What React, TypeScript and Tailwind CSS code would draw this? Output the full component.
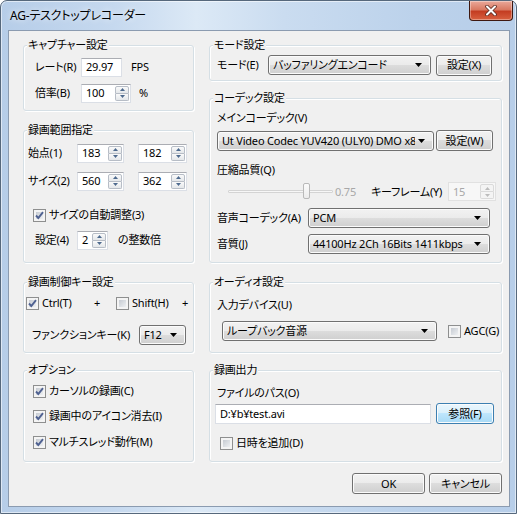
import React from "react";

// Windows 7 style dialog: AG-デスクトップレコーダー settings

const btnBg = "bg-[linear-gradient(#f2f2f2,#ebebeb_50%,#dddddd_50%,#cfcfcf)]";

function Arrow({ up, color }: { up?: boolean; color: string }) {
  return (
    <svg width="5" height="3" viewBox="0 0 5 3">
      <polygon points={up ? "2.5,0 5,3 0,3" : "0,0 5,0 2.5,3"} fill={color} />
    </svg>
  );
}

function Spinner({ disabled }: { disabled?: boolean }) {
  const cls = disabled
    ? "border-[#dadada] bg-[#f4f4f4]"
    : "border-[#b7bdc6] bg-[linear-gradient(#fafafa,#e4e7ea)]";
  const c = disabled ? "#bcbcbc" : "#4e6a8e";
  return (
    <div className="flex h-full w-[15px] shrink-0 flex-col py-[1px] pr-[1px]">
      <div className={`flex flex-1 items-center justify-center rounded-t-[2px] border ${cls}`}>
        <Arrow up color={c} />
      </div>
      <div className={`flex flex-1 items-center justify-center rounded-b-[2px] border border-t-0 ${cls}`}>
        <Arrow color={c} />
      </div>
    </div>
  );
}

function TextBox({ value, className = "" }: { value: string; className?: string }) {
  return (
    <div className={`flex items-center border border-[#dbdfe6] border-t-[#abadb3] bg-white pl-[4px] ${className}`}>
      <span>{value}</span>
    </div>
  );
}

function SpinBox({ value, className = "", disabled }: { value: string; className?: string; disabled?: boolean }) {
  return (
    <div
      className={`flex h-[19px] items-center border ${
        disabled ? "border-[#e1e1e1] bg-[#f7f7f7] text-[#a8a8a8]" : "border-[#dbdfe6] border-t-[#abadb3] bg-white"
      } ${className}`}
    >
      <span className="flex-1 pl-[4px]">{value}</span>
      <Spinner disabled={disabled} />
    </div>
  );
}

function Combo({ value, className = "" }: { value: string; className?: string }) {
  return (
    <div
      className={`flex h-[20px] items-center rounded-[3px] border border-[#707070] ${btnBg} pl-[4px] pr-[8px] shadow-[inset_0_0_0_1px_#fbfbfb] ${className}`}
    >
      <span className="flex-1 overflow-hidden">{value}</span>
      <svg width="7" height="4" viewBox="0 0 7 4" className="ml-[3px] shrink-0">
        <polygon points="0,0 7,0 3.5,4" fill="#000" />
      </svg>
    </div>
  );
}

function Button({ label, className = "", primary }: { label: string; className?: string; primary?: boolean }) {
  return (
    <div
      className={`flex h-[21px] items-center justify-center rounded-[3px] border ${
        primary
          ? "border-[#3c7fb1] bg-[linear-gradient(#eaf6fd,#d9f0fc_50%,#bee6fd_50%,#a7d9f5)]"
          : `border-[#707070] ${btnBg}`
      } shadow-[inset_0_0_0_1px_#fbfbfb] ${className}`}
    >
      {label}
    </div>
  );
}

function CheckBox({ checked }: { checked?: boolean }) {
  return (
    <span className="relative flex h-[13px] w-[13px] shrink-0 border border-[#8e8f8f] bg-[#f4f4f4] p-[2px]">
      <span className="h-full w-full bg-[linear-gradient(135deg,#c6cbd2,#eef0f2)]" />
      {checked && (
        <svg className="absolute inset-0" width="11" height="11" viewBox="0 0 11 11">
          <path d="M2 5.5 L4.3 8 L9 2.2" fill="none" stroke="#4f6191" strokeWidth="1.9" />
        </svg>
      )}
    </span>
  );
}

function Check({ label, checked, className = "" }: { label: string; checked?: boolean; className?: string }) {
  return (
    <div className={`flex h-[16px] items-center ${className}`}>
      <CheckBox checked={checked} />
      <span className="ml-[3px]">{label}</span>
    </div>
  );
}

function GroupBox({ title, className = "", children }: { title: string; className?: string; children?: React.ReactNode }) {
  return (
    <div className={`rounded-[3px] border border-[#d5dfe5] shadow-[inset_1px_1px_0_#ffffff,1px_1px_0_#ffffff] ${className}`}>
      <div className="-mt-[8px] ml-[3px] w-fit bg-[#f0f0f0] px-[1px] leading-[14px]">{title}</div>
      {children}
    </div>
  );
}

export default function App() {
  return (
    <div className="h-[514px] w-[517px] whitespace-nowrap font-['Noto_Sans','Noto_Sans_CJK_JP',sans-serif] text-[11px] leading-[16px] tracking-[-0.2px] text-black [font-feature-settings:'palt']">
      <div className="flex h-full w-full flex-col rounded-t-[7px] border border-[#56687c] bg-[linear-gradient(90deg,#b6cde8_0%,#c6d9ef_22%,#dce9f6_38%,#cadcf0_55%,#bcd2eb_80%,#b7cee9_100%)] shadow-[inset_0_0_0_1px_rgba(255,255,255,0.55)]">
        {/* title bar */}
        <div className="flex h-[29px] shrink-0 items-start justify-between">
          <div className="mt-[7px] pl-[9px] text-[12px] leading-[16px] [text-shadow:0_0_6px_#fff]">AG-テスクトップレコーダー</div>
          <div className="mr-[3px] flex h-[20px] w-[44px] items-center justify-center rounded-b-[4px] border border-t-0 border-[#3e1810] bg-[linear-gradient(#eaa99a,#d97a63_45%,#c43d22_55%,#d8603f)] shadow-[inset_0_0_0_1px_rgba(255,255,255,0.35)]">
            <svg width="12" height="11" viewBox="0 0 12 11">
              <path d="M2 1.5 L10 9.5 M10 1.5 L2 9.5" stroke="#5a2a20" strokeWidth="3.6" strokeLinecap="round" />
              <path d="M2 1.5 L10 9.5 M10 1.5 L2 9.5" stroke="#ffffff" strokeWidth="2" strokeLinecap="round" />
            </svg>
          </div>
        </div>

        {/* client area */}
        <div className="ml-[7px] h-[477px] w-[502px] border border-[#8b9bb0] bg-[#f0f0f0]">
          <div className="flex gap-[15px] pl-[14px] pt-[14px]">
            {/* left column */}
            <div className="flex w-[171px] flex-col">
              <GroupBox title="キャプチャー設定" className="h-[66px]">
                <div className="mt-[5px] flex h-[20px] items-center pl-[11px]">
                  <span className="w-[46px]">レート(R)</span>
                  <TextBox value="29.97" className="h-[19px] w-[41px]" />
                  <span className="ml-[9px]">FPS</span>
                </div>
                <div className="mt-[6px] flex h-[20px] items-center pl-[11px]">
                  <span className="w-[46px]">倍率(B)</span>
                  <SpinBox value="100" className="w-[50px]" />
                  <span className="ml-[8px]">%</span>
                </div>
              </GroupBox>

              <GroupBox title="録画範囲指定" className="mt-[19px] h-[133px]">
                <div className="mt-[6px] flex h-[20px] items-center pl-[4px]">
                  <span className="w-[49px]">始点(1)</span>
                  <SpinBox value="183" className="w-[47px]" />
                  <SpinBox value="182" className="ml-[14px] w-[49px]" />
                </div>
                <div className="mt-[8px] flex h-[20px] items-center pl-[4px]">
                  <span className="w-[49px]">サイズ(2)</span>
                  <SpinBox value="560" className="w-[47px]" />
                  <SpinBox value="362" className="ml-[14px] w-[49px]" />
                </div>
                <Check label="サイズの自動調整(3)" checked className="mt-[16px] pl-[9px]" />
                <div className="mt-[8px] flex h-[18px] items-center pl-[11px]">
                  <span className="w-[42px]">設定(4)</span>
                  <SpinBox value="2" className="w-[31px]" />
                  <span className="ml-[10px]">の整数倍</span>
                </div>
              </GroupBox>

              <GroupBox title="録画制御キー設定" className="mt-[19px] h-[71px]">
                <div className="mt-[6px] flex h-[16px] items-center pl-[2px]">
                  <Check label="Ctrl(T)" checked className="w-[68px]" />
                  <span className="w-[22px]">+</span>
                  <Check label="Shift(H)" className="w-[66px]" />
                  <span>+</span>
                </div>
                <div className="mt-[14px] flex h-[20px] items-center pl-[8px]">
                  <span className="w-[107px]">ファンクションキー(K)</span>
                  <Combo value="F12" className="w-[47px]" />
                </div>
              </GroupBox>

              <GroupBox title="オプション" className="mt-[17px] h-[92px]">
                <Check label="カーソルの録画(C)" checked className="mt-[6px] pl-[9px]" />
                <Check label="録画中のアイコン消去(I)" checked className="mt-[9px] pl-[9px]" />
                <Check label="マルチスレッド動作(M)" checked className="mt-[10px] pl-[9px]" />
              </GroupBox>
            </div>

            {/* right column */}
            <div className="flex w-[293px] flex-col">
              <GroupBox title="モード設定" className="h-[36px]">
                <div className="mt-[3px] flex h-[20px] items-center pl-[7px]">
                  <span className="w-[51px]">モード(E)</span>
                  <Combo value="バッファリングエンコード" className="w-[163px]" />
                  <Button label="設定(X)" className="ml-[5px] w-[56px]" />
                </div>
              </GroupBox>

              <GroupBox title="コーデック設定" className="mt-[17px] h-[165px]">
                <div className="mt-[5px] h-[16px] pl-[7px]">メインコーデック(V)</div>
                <div className="mt-[4px] flex h-[21px] items-center pl-[7px]">
                  <Combo value="Ut Video Codec YUV420 (ULY0) DMO x86" className="w-[217px]" />
                  <Button label="設定(W)" className="ml-[2px] w-[57px]" />
                </div>
                <div className="mt-[11px] h-[16px] pl-[7px]">圧縮品質(Q)</div>
                <div className="mt-[4px] flex h-[19px] items-center pl-[18px]">
                  <div className="relative flex h-[19px] w-[105px] items-center">
                    <div className="h-[3px] w-full rounded-[1px] border border-[#d4d4d4] bg-[#f7f7f7]" />
                    <div className="absolute left-[75px] top-[1px] h-[16px] w-[7px] rounded-[2px] border border-[#b9b9b9] bg-[linear-gradient(#fbfbfb,#ececec)]" />
                  </div>
                  <span className="w-[38px] pl-[2px] text-[#a8a8a8]">0.75</span>
                  <span className="w-[77px]">キーフレーム(Y)</span>
                  <SpinBox value="15" disabled className="w-[48px]" />
                </div>
                <div className="mt-[7px] flex h-[20px] items-center pl-[7px]">
                  <span className="w-[91px]">音声コーデック(A)</span>
                  <Combo value="PCM" className="w-[182px]" />
                </div>
                <div className="mt-[6px] flex h-[20px] items-center pl-[7px]">
                  <span className="w-[91px]">音質(J)</span>
                  <Combo value="44100Hz 2Ch 16Bits 1411kbps" className="w-[182px]" />
                </div>
              </GroupBox>

              <GroupBox title="オーディオ設定" className="mt-[19px] h-[71px]">
                <div className="mt-[8px] h-[16px] pl-[7px]">入力デバイス(U)</div>
                <div className="mt-[8px] flex h-[20px] items-center pl-[12px]">
                  <Combo value="ループバック音源" className="w-[215px]" />
                  <Check label="AGC(G)" className="ml-[11px]" />
                </div>
              </GroupBox>

              <GroupBox title="録画出力" className="mt-[17px] h-[92px]">
                <div className="mt-[8px] h-[16px] pl-[7px]">ファイルのパス(O)</div>
                <div className="mt-[2px] flex h-[21px] items-center pl-[5px]">
                  <TextBox value="D:¥b¥test.avi" className="h-[20px] w-[216px]" />
                  <Button label="参照(F)" primary className="ml-[5px] w-[58px]" />
                </div>
                <Check label="日時を追加(D)" className="mt-[11px] pl-[10px]" />
              </GroupBox>
            </div>
          </div>

          <div className="mt-[11px] flex justify-end gap-[4px] pr-[7px]">
            <Button label="OK" className="w-[73px]" />
            <Button label="キャンセル" className="w-[73px]" />
          </div>
        </div>
      </div>
    </div>
  );
}
